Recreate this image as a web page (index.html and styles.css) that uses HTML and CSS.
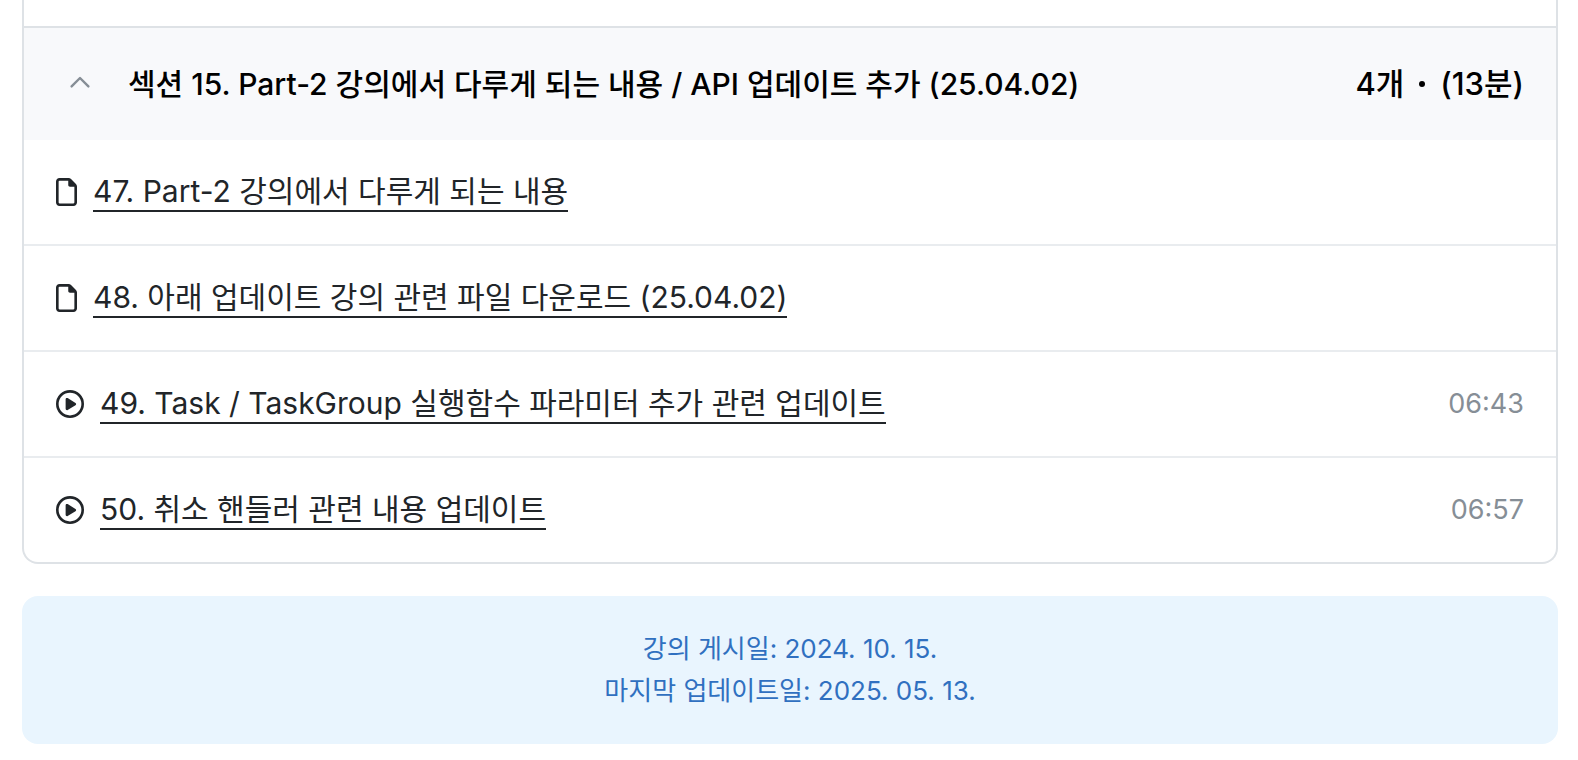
FILE: index.html
```html
<!DOCTYPE html>
<html lang="ko">
<head>
    <meta charset="UTF-8">
    <meta name="viewport" content="width=device-width, initial-scale=1.0">
    <title>커리큘럼</title>
    <link rel="stylesheet" href="styles.css">
</head>
<body>
    <!-- Shared icons -->
    <svg class="icon-defs" aria-hidden="true">
        <symbol id="icon-file" viewBox="0 0 384 512">
            <path d="M320 464c8.8 0 16-7.2 16-16V160H256c-17.7 0-32-14.3-32-32V48H64c-8.8 0-16 7.2-16 16V448c0 8.8 7.2 16 16 16H320zM0 64C0 28.7 28.7 0 64 0H229.5c17 0 33.3 6.7 45.3 18.7l90.5 90.5c12 12 18.7 28.3 18.7 45.3V448c0 35.3-28.7 64-64 64H64c-35.3 0-64-28.7-64-64V64z"/>
        </symbol>
        <symbol id="icon-play" viewBox="0 0 512 512">
            <path d="M464 256A208 208 0 1 0 48 256a208 208 0 1 0 416 0zM0 256a256 256 0 1 1 512 0A256 256 0 1 1 0 256zM188.3 147.1c7.6-4.2 16.8-4.1 24.3 .5l144 88c7.1 4.4 11.5 12.1 11.5 20.5s-4.4 16.1-11.5 20.5l-144 88c-7.4 4.5-16.7 4.7-24.3 .5s-12.3-12.2-12.3-20.9V168c0-8.7 4.7-16.7 12.3-20.9z"/>
        </symbol>
    </svg>

    <main>
        <div class="curriculum">
            <button class="section-header" type="button" aria-expanded="true" aria-controls="section-15">
                <svg class="chevron" viewBox="0 0 20 20" aria-hidden="true">
                    <path d="M3 12L10 5L17 12"/>
                </svg>
                <span class="section-title">섹션 15. Part-2 강의에서 다루게 되는 내용 / API 업데이트 추가 (25.04.02)</span>
                <span class="section-info">
                    <span>4개</span>
                    <span class="dot"></span>
                    <span>(13분)</span>
                </span>
            </button>

            <ul class="lessons" id="section-15">
                <li class="lesson">
                    <svg class="icon icon-file" aria-hidden="true"><use href="#icon-file"/></svg>
                    <a href="#">47. Part-2 강의에서 다루게 되는 내용</a>
                </li>
                <li class="lesson">
                    <svg class="icon icon-file" aria-hidden="true"><use href="#icon-file"/></svg>
                    <a href="#">48. 아래 업데이트 강의 관련 파일 다운로드 (25.04.02)</a>
                </li>
                <li class="lesson">
                    <svg class="icon" aria-hidden="true"><use href="#icon-play"/></svg>
                    <a href="#">49. Task / TaskGroup 실행함수 파라미터 추가 관련 업데이트</a>
                    <span class="duration">06:43</span>
                </li>
                <li class="lesson">
                    <svg class="icon" aria-hidden="true"><use href="#icon-play"/></svg>
                    <a href="#">50. 취소 핸들러 관련 내용 업데이트</a>
                    <span class="duration">06:57</span>
                </li>
            </ul>
        </div>

        <div class="dates">
            <p>강의 게시일: 2024. 10. 15.</p>
            <p>마지막 업데이트일: 2025. 05. 13.</p>
        </div>
    </main>
</body>
</html>
```
FILE: styles.css
```css
* {
    box-sizing: border-box;
}
body {
    margin: 0;
    padding: 0 20px 16px 22px;
    background: #fff;
    color: #212529;
    font-family: Inter, "Noto Sans CJK KR", sans-serif;
}
.icon-defs {
    display: none;
}
.curriculum {
    padding-top: 26px;
    border: 2px solid #dee2e6;
    border-top: none;
    border-radius: 0 0 16px 16px;
    overflow: hidden;
}
.section-header {
    display: flex;
    align-items: center;
    width: 100%;
    min-height: 114px;
    padding: 0 32px 0 44px;
    border: none;
    border-top: 2px solid #dee2e6;
    background: #f8f9fb;
    color: #000;
    font-family: inherit;
    font-size: 30px;
    font-weight: 500;
    line-height: 44px;
    text-align: left;
    cursor: pointer;
}
.chevron {
    flex: none;
    width: 24px;
    height: 24px;
    margin-right: 36px;
    fill: none;
    stroke: #868e96;
    stroke-width: 2;
    stroke-linecap: round;
    stroke-linejoin: round;
}
.section-title {
    flex: 1;
}
.section-info {
    display: flex;
    align-items: center;
    gap: 15px;
    font-size: 31px;
}
.dot {
    width: 6px;
    height: 6px;
    border-radius: 50%;
    background: #000;
}
.lessons {
    margin: 0;
    padding: 0;
    list-style: none;
}
.lesson {
    display: flex;
    align-items: center;
    gap: 16px;
    min-height: 104px;
    padding: 0 32px;
}
.lesson + .lesson {
    min-height: 106px;
    border-top: 2px solid #e9ecef;
}
.icon {
    flex: none;
    width: 28px;
    height: 28px;
    fill: #212529;
}
.icon-file {
    width: 21px;
}
.lesson a {
    border-bottom: 2px solid #212529;
    color: #212529;
    font-size: 30px;
    line-height: 38px;
    text-decoration: none;
}
.duration {
    margin-left: auto;
    color: #868e96;
    font-size: 27px;
    line-height: 40px;
}
.dates {
    margin-top: 32px;
    padding: 32px;
    border-radius: 16px;
    background: #e9f5fe;
    color: #3070c0;
    font-size: 26px;
    line-height: 42px;
    text-align: center;
}
.dates p {
    margin: 0;
}
```
